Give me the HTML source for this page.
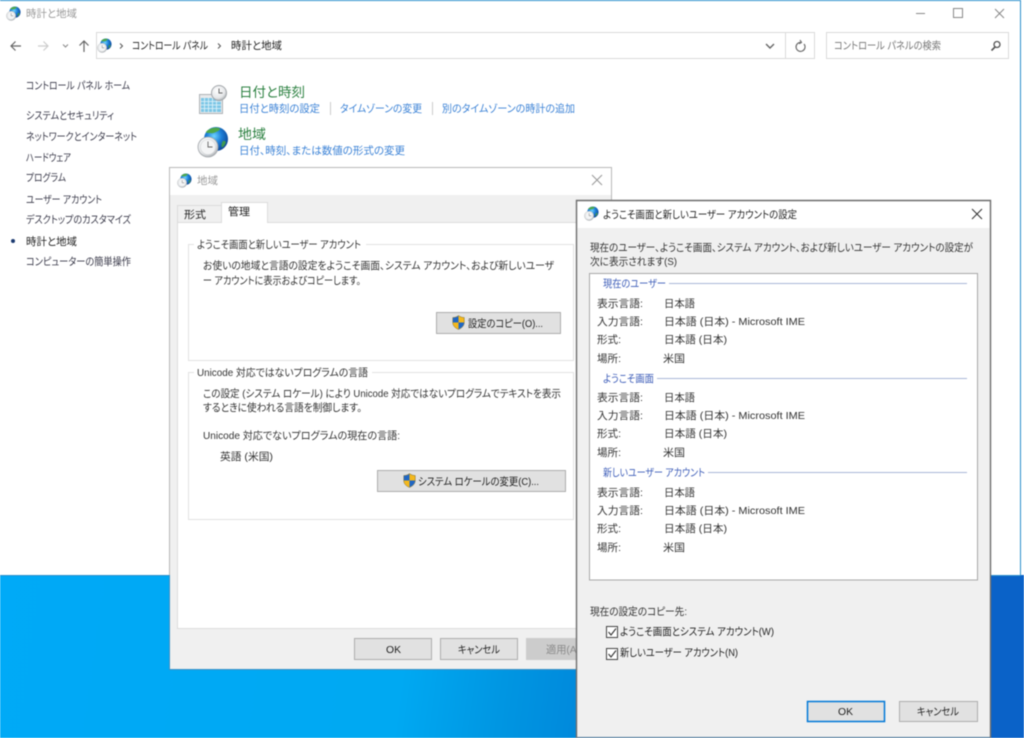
<!DOCTYPE html>
<html lang="ja"><head><meta charset="utf-8"><title>時計と地域</title>
<style>
html,body{margin:0;padding:0;width:1024px;height:738px;overflow:hidden;background:#fff}
svg{display:block;filter:blur(.4px)}
text{font-family:"Liberation Sans","Noto Sans CJK JP",sans-serif;font-size:10.5px;fill:#333;font-feature-settings:"palt";white-space:pre}
.n{fill:#3a3a4a}.g{fill:#9a9a9a}.l{fill:#3b82d6}.h{font-size:13.5px;fill:#2b8040}.b{fill:#3c5cb8}.k{fill:#222}
</style></head><body>
<svg xmlns="http://www.w3.org/2000/svg" width="1024" height="738" viewBox="0 0 1024 738">
<defs>
<linearGradient id="wp" x1="0" y1="0" x2="1" y2=".1"><stop offset="0" stop-color="#00aaf8"/><stop offset=".48" stop-color="#00a9f2"/><stop offset=".58" stop-color="#0096e2"/><stop offset=".76" stop-color="#0078d4"/><stop offset=".97" stop-color="#0a62c8"/></linearGradient>
<radialGradient id="gl" cx=".42" cy=".38" r=".7"><stop offset="0" stop-color="#6fd4ff"/><stop offset=".45" stop-color="#1c7ed8"/><stop offset="1" stop-color="#0a3a88"/></radialGradient>
<radialGradient id="ck" cx=".4" cy=".35" r=".7"><stop offset="0" stop-color="#ffffff"/><stop offset=".7" stop-color="#e4e6e8"/><stop offset="1" stop-color="#a4a8ac"/></radialGradient>
<symbol id="globe" viewBox="0 0 32 32">
<circle cx="19" cy="13" r="12" fill="url(#gl)"/>
<path d="M12 3.500c3-2 8-2.500 11-1 .5 1.500-2 2.500-4 3.500-2 1-4 1.500-6 1-2 0-3 0-4-.5 0-1.200 1.500-2.200 3-3z" fill="#4fa848"/>
<path d="M26 15c1.500-.5 3 0 2.800 1.500-.8 2.500-2.300 4.500-3.800 5-.7-1.500-.5-3-.2-4 .2-1 .6-2 1.200-2.500z" fill="#3f9a50"/>
<circle cx="11" cy="21" r="10" fill="url(#ck)" stroke="#a2a6aa" stroke-width=".8"/>
<circle cx="11" cy="21" r="7.500" fill="#f4f5f6" stroke="#d4d6d8" stroke-width=".6"/>
<path d="M11 15.500V21h4.500" fill="none" stroke="#666" stroke-width=".9"/>
</symbol>
<symbol id="sh" viewBox="0 0 14 16">
<path d="M7 .5C5 2 3 2.600.8 2.600V8c0 3.600 2.600 6 6.200 7.500 3.600-1.500 6.200-3.900 6.200-7.500V2.600C11 2.600 9 2 7 .5z" fill="#f4b81c" stroke="#7a6a30" stroke-width=".5"/>
<path d="M7 .8V8H1V2.800C3.200 2.800 5.200 2.200 7 .8zM7 8h6c0 3.400-2.500 5.800-6 7.200z" fill="#1f66c4"/>
</symbol>
</defs>

<!-- desktop -->
<rect width="1024" height="738" fill="url(#wp)"/>

<!-- main window -->
<rect x="0" y="0" width="1021" height="576" fill="#2a8ecc"/>
<rect x="0" y="1" width="1020" height="574" fill="#fff"/>
<rect x="1021" y="0" width="3" height="575" fill="#fff"/>
<use href="#globe" x="6" y="6" width="15" height="15"/>
<text lengthAdjust="spacingAndGlyphs" class="g" x="26" y="17" textLength="51">時計と地域</text>
<path d="M916 13.500h9" stroke="#888" fill="none"/>
<rect x="953.500" y="8.500" width="9" height="9" fill="none" stroke="#888"/>
<path d="M995 9l9 9M1004 9l-9 9" stroke="#888" fill="none"/>

<path d="M21 46H11M15.500 41.500L11 46l4.500 4.500" stroke="#666" stroke-width="1.200" fill="none"/>
<path d="M38 46h10M43.500 41.500L48 46l-4.500 4.500" stroke="#ccc" stroke-width="1.200" fill="none"/>
<path d="M63 44.500l2.500 2.500 2.500-2.500" stroke="#888" fill="none"/>
<path d="M84 52V41M79.500 45.500L84 41l4.500 4.500" stroke="#666" stroke-width="1.200" fill="none"/>

<rect x="96.500" y="32.500" width="718" height="26" fill="#fff" stroke="#dadada"/>
<path d="M785.500 33v25" stroke="#dadada"/>
<use href="#globe" x="97" y="38" width="15" height="15"/>
<path d="M120 43.500l2.500 2.500-2.500 2.500M218 43.500l2.500 2.500-2.500 2.500" stroke="#555" fill="none"/>
<text lengthAdjust="spacingAndGlyphs" class="k" x="132" y="49" textLength="76">コントロール パネル</text>
<text lengthAdjust="spacingAndGlyphs" class="k" x="231" y="49" textLength="51">時計と地域</text>
<path d="M766 44l4 4 4-4" stroke="#666" stroke-width="1.400" fill="none"/>
<path d="M804 44a4.500 4.500 0 1 1-3.500-1.600M800 40l1.500 2.400-2.400 1.400" stroke="#666" stroke-width="1.100" fill="none"/>
<rect x="826.500" y="32.500" width="182" height="26" fill="#fff" stroke="#dadada"/>
<text lengthAdjust="spacingAndGlyphs" style="fill:#777" x="834" y="49" textLength="107">コントロール パネルの検索</text>
<circle cx="997" cy="44.500" r="3" fill="none" stroke="#555" stroke-width="1.300"/>
<path d="M995 47l-3.500 3.500" stroke="#555" stroke-width="1.600"/>

<text lengthAdjust="spacingAndGlyphs" class="n" x="26" y="89" textLength="104">コントロール パネル ホーム</text>
<text lengthAdjust="spacingAndGlyphs" class="n" x="26" y="119" textLength="88">システムとセキュリティ</text>
<text lengthAdjust="spacingAndGlyphs" class="n" x="26" y="140" textLength="111">ネットワークとインターネット</text>
<text lengthAdjust="spacingAndGlyphs" class="n" x="26" y="161" textLength="45">ハードウェア</text>
<text lengthAdjust="spacingAndGlyphs" class="n" x="26" y="181" textLength="40">プログラム</text>
<text lengthAdjust="spacingAndGlyphs" class="n" x="26" y="203" textLength="76">ユーザー アカウント</text>
<text lengthAdjust="spacingAndGlyphs" class="n" x="26" y="223" textLength="105">デスクトップのカスタマイズ</text>
<circle cx="13" cy="241" r="2" fill="#1c3a70"/>
<text lengthAdjust="spacingAndGlyphs" class="k" x="26" y="245" textLength="51">時計と地域</text>
<text lengthAdjust="spacingAndGlyphs" class="n" x="26" y="265" textLength="105">コンピューターの簡単操作</text>

<!-- calendar icon -->
<rect x="199.500" y="94.500" width="23" height="19" fill="#e8eaec" stroke="#aeb2b6"/>
<rect x="201" y="98" width="20" height="14" fill="#7cc6e6"/>
<path d="M204.500 98v14M208.500 98v14M212.500 98v14M216.500 98v14M201 101.500h20M201 105h20M201 108.500h20" stroke="#e4f4fb" stroke-width=".8"/>
<circle cx="219" cy="93" r="7.500" fill="url(#ck)" stroke="#a2a6aa"/>
<path d="M219 88.500V93h3.500" fill="none" stroke="#666"/>
<text lengthAdjust="spacingAndGlyphs" class="h" x="239" y="97" textLength="66">日付と時刻</text>
<text lengthAdjust="spacingAndGlyphs" class="l" x="239" y="112" textLength="81">日付と時刻の設定</text>
<path d="M330.500 102v13M432.500 102v13" stroke="#ccc"/>
<text lengthAdjust="spacingAndGlyphs" class="l" x="340" y="112" textLength="82">タイムゾーンの変更</text>
<text lengthAdjust="spacingAndGlyphs" class="l" x="442" y="112" textLength="133">別のタイムゾーンの時計の追加</text>
<use href="#globe" x="197" y="126" width="32" height="32"/>
<text lengthAdjust="spacingAndGlyphs" class="h" x="238" y="139" textLength="28">地域</text>
<text lengthAdjust="spacingAndGlyphs" class="l" x="239" y="154" textLength="166">日付、時刻、または数値の形式の変更</text>

<!-- dialog 1 -->
<rect x="169" y="167" width="443" height="503" fill="#f0f0f0" stroke="none"/>
<path d="M169.500 669.500V167.500H611.500V669.500H169.500" fill="none" stroke="#b8b8b8"/>
<path d="M169.500 575V669.500H576" fill="none" stroke="#3a8fc4"/>
<rect x="170" y="168" width="441" height="27" fill="#fff"/>
<use href="#globe" x="177" y="173" width="15" height="15"/>
<text lengthAdjust="spacingAndGlyphs" class="g" x="197" y="184" textLength="21">地域</text>
<path d="M592 175l10 10M602 175l-10 10" stroke="#999" fill="none"/>
<rect x="177.500" y="222.500" width="426" height="406" fill="#fff" stroke="#dcdcdc"/>
<rect x="177.500" y="205.500" width="44" height="17" fill="#f0f0f0" stroke="#dcdcdc"/>
<text lengthAdjust="spacingAndGlyphs" class="k" x="184" y="218" textLength="22">形式</text>
<rect x="221.500" y="202.500" width="46" height="20" fill="#fff" stroke="#dcdcdc"/>
<rect x="222" y="222" width="45" height="1" fill="#fff"/>
<text lengthAdjust="spacingAndGlyphs" class="k" x="228" y="215" textLength="22">管理</text>

<rect x="188.500" y="244.500" width="385" height="116" fill="#fff" stroke="#e2e2e2"/>
<rect x="194" y="240" width="172" height="8" fill="#fff"/>
<text lengthAdjust="spacingAndGlyphs" x="197" y="248" textLength="164">ようこそ画面と新しいユーザー アカウント</text>
<text lengthAdjust="spacingAndGlyphs" x="203" y="269" textLength="351">お使いの地域と言語の設定をようこそ画面、システム アカウント、および新しいユーザ</text>
<text lengthAdjust="spacingAndGlyphs" x="203" y="284" textLength="158">ー アカウントに表示およびコピーします。</text>
<rect x="436.500" y="312.500" width="124" height="21" fill="#e1e1e1" stroke="#adadad"/>
<use href="#sh" x="452" y="315" width="13" height="15"/>
<text lengthAdjust="spacingAndGlyphs" class="k" x="468" y="327" textLength="75">設定のコピー(O)...</text>

<rect x="188.500" y="372.500" width="385" height="147" fill="#fff" stroke="#e2e2e2"/>
<rect x="194" y="368" width="178" height="8" fill="#fff"/>
<text lengthAdjust="spacingAndGlyphs" x="197" y="376" textLength="171">Unicode 対応ではないプログラムの言語</text>
<text lengthAdjust="spacingAndGlyphs" x="203" y="397" textLength="358">この設定 (システム ロケール) により Unicode 対応ではないプログラムでテキストを表示</text>
<text lengthAdjust="spacingAndGlyphs" x="203" y="411" textLength="159">するときに使われる言語を制御します。</text>
<text lengthAdjust="spacingAndGlyphs" x="203" y="439" textLength="197">Unicode 対応でないプログラムの現在の言語:</text>
<text lengthAdjust="spacingAndGlyphs" x="220" y="460" textLength="53">英語 (米国)</text>
<rect x="377.500" y="470.500" width="188" height="21" fill="#e1e1e1" stroke="#adadad"/>
<use href="#sh" x="403" y="473" width="13" height="15"/>
<text lengthAdjust="spacingAndGlyphs" class="k" x="418" y="485" textLength="121">システム ロケールの変更(C)...</text>

<rect x="354.500" y="638.500" width="77" height="21" fill="#e1e1e1" stroke="#adadad"/>
<text lengthAdjust="spacingAndGlyphs" class="k" x="386" y="653" textLength="15">OK</text>
<rect x="440.500" y="638.500" width="77" height="21" fill="#e1e1e1" stroke="#adadad"/>
<text lengthAdjust="spacingAndGlyphs" class="k" x="458" y="653" textLength="42">キャンセル</text>
<rect x="526" y="638" width="60" height="22" fill="#cccccc"/>
<text lengthAdjust="spacingAndGlyphs" x="546" y="653" style="fill:#8a8a8a" textLength="34">適用(A)</text>

<!-- dialog 2 -->
<rect x="576" y="200" width="415" height="538" fill="#f0f0f0"/>
<path d="M576.500 738V200.500H990.500V738" fill="none" stroke="#6e6e6e" stroke-width="1.400"/>
<path d="M577 737.500H990" stroke="#3a6a90"/>
<rect x="577.500" y="201.500" width="412" height="26.500" fill="#fff"/>
<use href="#globe" x="584" y="206" width="15" height="15"/>
<text lengthAdjust="spacingAndGlyphs" class="k" x="603" y="218" textLength="194">ようこそ画面と新しいユーザー アカウントの設定</text>
<path d="M972 209l10 10M982 209l-10 10" stroke="#333" fill="none"/>
<text lengthAdjust="spacingAndGlyphs" x="590" y="251" textLength="383">現在のユーザー、ようこそ画面、システム アカウント、および新しいユーザー アカウントの設定が</text>
<text lengthAdjust="spacingAndGlyphs" x="590" y="265" textLength="87">次に表示されます(S)</text>
<rect x="589.500" y="273.500" width="388" height="306.500" fill="#fff" stroke="#a8a8a8"/>

<text lengthAdjust="spacingAndGlyphs" class="b" x="603" y="287" textLength="63">現在のユーザー</text>
<path d="M669 283.500h298" stroke="#a9b7d8"/>
<text lengthAdjust="spacingAndGlyphs" x="597" y="307" textLength="46">表示言語:</text><text lengthAdjust="spacingAndGlyphs" x="664" y="307" textLength="31">日本語</text>
<text lengthAdjust="spacingAndGlyphs" x="597" y="325" textLength="46">入力言語:</text><text lengthAdjust="spacingAndGlyphs" x="664" y="325" textLength="141">日本語 (日本) - Microsoft IME</text>
<text lengthAdjust="spacingAndGlyphs" x="597" y="343" textLength="24">形式:</text><text lengthAdjust="spacingAndGlyphs" x="664" y="343" textLength="63">日本語 (日本)</text>
<text lengthAdjust="spacingAndGlyphs" x="597" y="362" textLength="24">場所:</text><text lengthAdjust="spacingAndGlyphs" x="663" y="362" textLength="22">米国</text>

<text lengthAdjust="spacingAndGlyphs" class="b" x="603" y="382" textLength="51">ようこそ画面</text>
<path d="M657 378.500h310" stroke="#a9b7d8"/>
<text lengthAdjust="spacingAndGlyphs" x="597" y="401" textLength="46">表示言語:</text><text lengthAdjust="spacingAndGlyphs" x="664" y="401" textLength="31">日本語</text>
<text lengthAdjust="spacingAndGlyphs" x="597" y="419" textLength="46">入力言語:</text><text lengthAdjust="spacingAndGlyphs" x="664" y="419" textLength="141">日本語 (日本) - Microsoft IME</text>
<text lengthAdjust="spacingAndGlyphs" x="597" y="437" textLength="24">形式:</text><text lengthAdjust="spacingAndGlyphs" x="664" y="437" textLength="63">日本語 (日本)</text>
<text lengthAdjust="spacingAndGlyphs" x="597" y="456" textLength="24">場所:</text><text lengthAdjust="spacingAndGlyphs" x="663" y="456" textLength="22">米国</text>

<text lengthAdjust="spacingAndGlyphs" class="b" x="603" y="476" textLength="102">新しいユーザー アカウント</text>
<path d="M708 472.500h259" stroke="#a9b7d8"/>
<text lengthAdjust="spacingAndGlyphs" x="597" y="496" textLength="46">表示言語:</text><text lengthAdjust="spacingAndGlyphs" x="664" y="496" textLength="31">日本語</text>
<text lengthAdjust="spacingAndGlyphs" x="597" y="514" textLength="46">入力言語:</text><text lengthAdjust="spacingAndGlyphs" x="664" y="514" textLength="141">日本語 (日本) - Microsoft IME</text>
<text lengthAdjust="spacingAndGlyphs" x="597" y="532" textLength="24">形式:</text><text lengthAdjust="spacingAndGlyphs" x="664" y="532" textLength="63">日本語 (日本)</text>
<text lengthAdjust="spacingAndGlyphs" x="597" y="551" textLength="24">場所:</text><text lengthAdjust="spacingAndGlyphs" x="663" y="551" textLength="22">米国</text>

<text lengthAdjust="spacingAndGlyphs" x="590" y="615" textLength="97">現在の設定のコピー先:</text>
<rect x="606.500" y="626.500" width="11" height="11" fill="#fff" stroke="#444"/>
<path d="M608.500 632l2.500 3 5-6.500" fill="none" stroke="#333" stroke-width="1.100"/>
<text lengthAdjust="spacingAndGlyphs" class="k" x="620" y="635" textLength="154">ようこそ画面とシステム アカウント(W)</text>
<rect x="606.500" y="648.500" width="11" height="11" fill="#fff" stroke="#444"/>
<path d="M608.500 654l2.500 3 5-6.500" fill="none" stroke="#333" stroke-width="1.100"/>
<text lengthAdjust="spacingAndGlyphs" class="k" x="620" y="656" textLength="118">新しいユーザー アカウント(N)</text>

<rect x="807.500" y="701.500" width="77" height="20" fill="#e1e1e1" stroke="#0078d7" stroke-width="1.500"/>
<text lengthAdjust="spacingAndGlyphs" class="k" x="838" y="715" textLength="15">OK</text>
<rect x="899.500" y="701.500" width="78" height="20" fill="#e1e1e1" stroke="#adadad"/>
<text lengthAdjust="spacingAndGlyphs" class="k" x="917" y="715" textLength="42">キャンセル</text>
</svg>
</body></html>
